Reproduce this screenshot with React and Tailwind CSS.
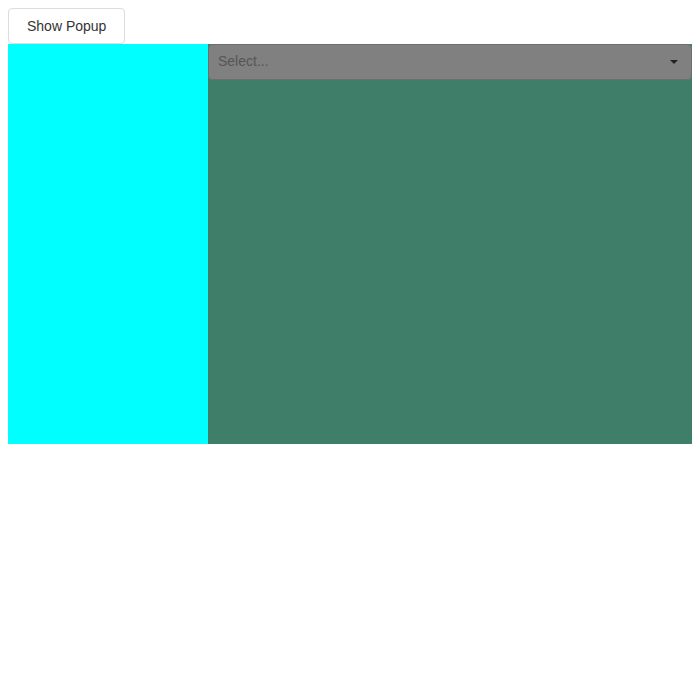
export default function App() {
  return (
    <div className="p-2 font-['Liberation_Sans',Arial,sans-serif]">
      <button className="h-9 px-[18px] border border-[#dcdcdc] rounded bg-white text-sm text-[#333]">
        Show Popup
      </button>
      <div className="flex h-[400px]">
        <div className="w-[200px] bg-[#00ffff]" />
        <div className="flex-1 bg-[#3f7f6a]">
          <div className="h-9 flex items-center justify-between pl-[9px] pr-[13px] pb-[2px] bg-[#808080] border border-[#6e6e6e] rounded">
            <span className="text-sm text-[#555]">Select...</span>
            <svg width="8" height="4" viewBox="0 0 8 4" className="mt-[2px]">
              <path d="M0 0 L8 0 L4 4 Z" fill="#222" />
            </svg>
          </div>
        </div>
      </div>
    </div>
  );
}
